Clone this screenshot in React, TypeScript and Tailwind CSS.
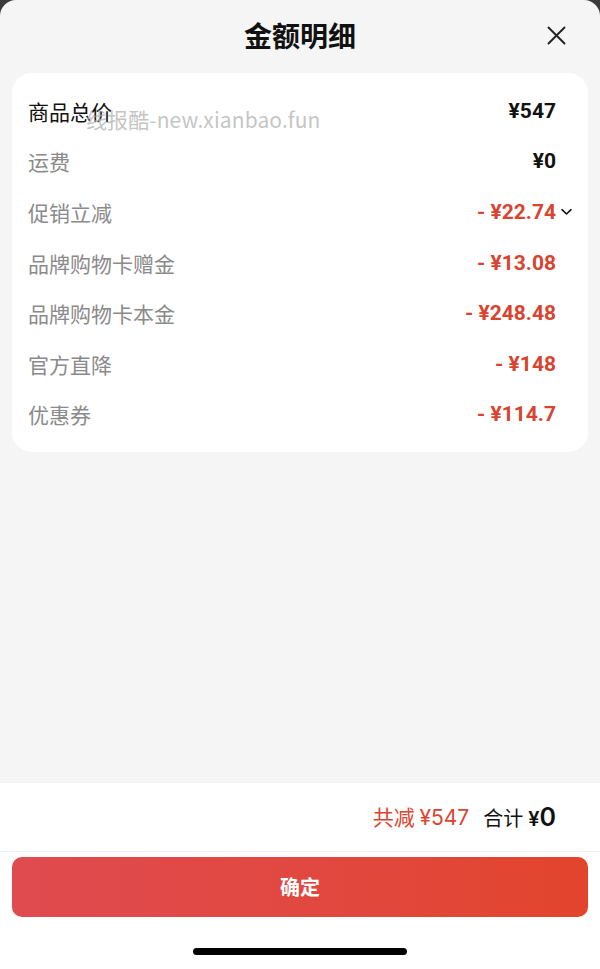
import React from 'react';

type Row = { label: string; value: string; discount?: boolean; strong?: boolean; expandable?: boolean };

const rows: Row[] = [
  { label: '商品总价', value: '¥547', strong: true },
  { label: '运费', value: '¥0' },
  { label: '促销立减', value: '- ¥22.74', discount: true, expandable: true },
  { label: '品牌购物卡赠金', value: '- ¥13.08', discount: true },
  { label: '品牌购物卡本金', value: '- ¥248.48', discount: true },
  { label: '官方直降', value: '- ¥148', discount: true },
  { label: '优惠券', value: '- ¥114.7', discount: true },
];

const cjk = "font-['Noto_Sans_CJK_SC',sans-serif]";
const num = "font-['Roboto','Noto_Sans_CJK_SC',sans-serif]";

export default function App() {
  return (
    <div className="h-[969px] w-[600px] overflow-hidden bg-[#3a3a3a]">
      <div className={`flex h-full flex-col rounded-t-[16px] bg-[#f5f5f5] ${cjk}`}>
        {/* header */}
        <div className="relative flex h-[73px] shrink-0 items-center justify-center pb-[3px]">
          <h1 className="text-[28px] font-bold leading-none text-[#111]">金额明细</h1>
          <button className="absolute right-[34px] top-[26px] text-[#222]" aria-label="close">
            <svg width="19" height="19" viewBox="0 0 19 19" fill="none" stroke="currentColor" strokeWidth={1.9} strokeLinecap="round">
              <path d="M1.5 1.5l16 16M17.5 1.5l-16 16" />
            </svg>
          </button>
        </div>

        {/* detail card */}
        <div className="relative mx-3 rounded-[20px] bg-white pb-[12px] pl-4 pr-8 pt-[13px]">
          {rows.map(r => (
            <div key={r.label} className="flex h-[50.6px] items-center justify-between">
              <span className={`text-[21px] leading-none ${r.strong ? 'text-[#111]' : 'text-[#8a8a8a]'}`}>{r.label}</span>
              <span
                className={`relative ${num} text-[21px] font-bold leading-none ${r.discount ? 'text-[#d9432f]' : 'text-[#111]'}`}
              >
                {r.value}
                {r.expandable && (
                  <svg
                    className="absolute -right-[16px] top-1/2 -translate-y-1/2 text-[#111]"
                    width="11"
                    height="7"
                    viewBox="0 0 11 7"
                    fill="none"
                    stroke="currentColor"
                    strokeWidth={1.6}
                    strokeLinecap="round"
                    strokeLinejoin="round"
                  >
                    <path d="M1 1.2l4.5 4.3L10 1.2" />
                  </svg>
                )}
              </span>
            </div>
          ))}
          {/* watermark */}
          <span className="pointer-events-none absolute left-[74px] top-[36px] text-[21px] leading-none tracking-[0.1px] text-[#b5b5b5]/80">
            线报酷-new.xianbao.fun
          </span>
        </div>

        <div className="flex-1" />

        {/* footer */}
        <div className="shrink-0 bg-white">
          <div className="flex h-[68px] items-center justify-end gap-[14px] pr-[44px]">
            <span className="text-[21px] leading-none text-[#d9452f]">
              共减 <span className="font-['Inter',sans-serif]">¥547</span>
            </span>
            <span className="flex items-baseline text-[20px] leading-none text-[#111]">
              合计
              <span className="ml-[5px] font-['Inter',sans-serif] font-semibold">¥</span>
              <span className="font-['Inter',sans-serif] text-[25px] font-semibold">0</span>
            </span>
          </div>
          <div className="h-px bg-[#f0f0f0]" />
          <div className="px-3 pt-[5px]">
            <button className="flex h-[60px] w-full items-center justify-center rounded-[10px] bg-gradient-to-r from-[#e04b50] to-[#e2442c] text-[20px] font-bold text-white">
              确定
            </button>
          </div>
          <div className="flex h-[52px] items-center justify-center pt-[16px]">
            <div className="h-[7px] w-[214px] rounded-full bg-black" />
          </div>
        </div>
      </div>
    </div>
  );
}
